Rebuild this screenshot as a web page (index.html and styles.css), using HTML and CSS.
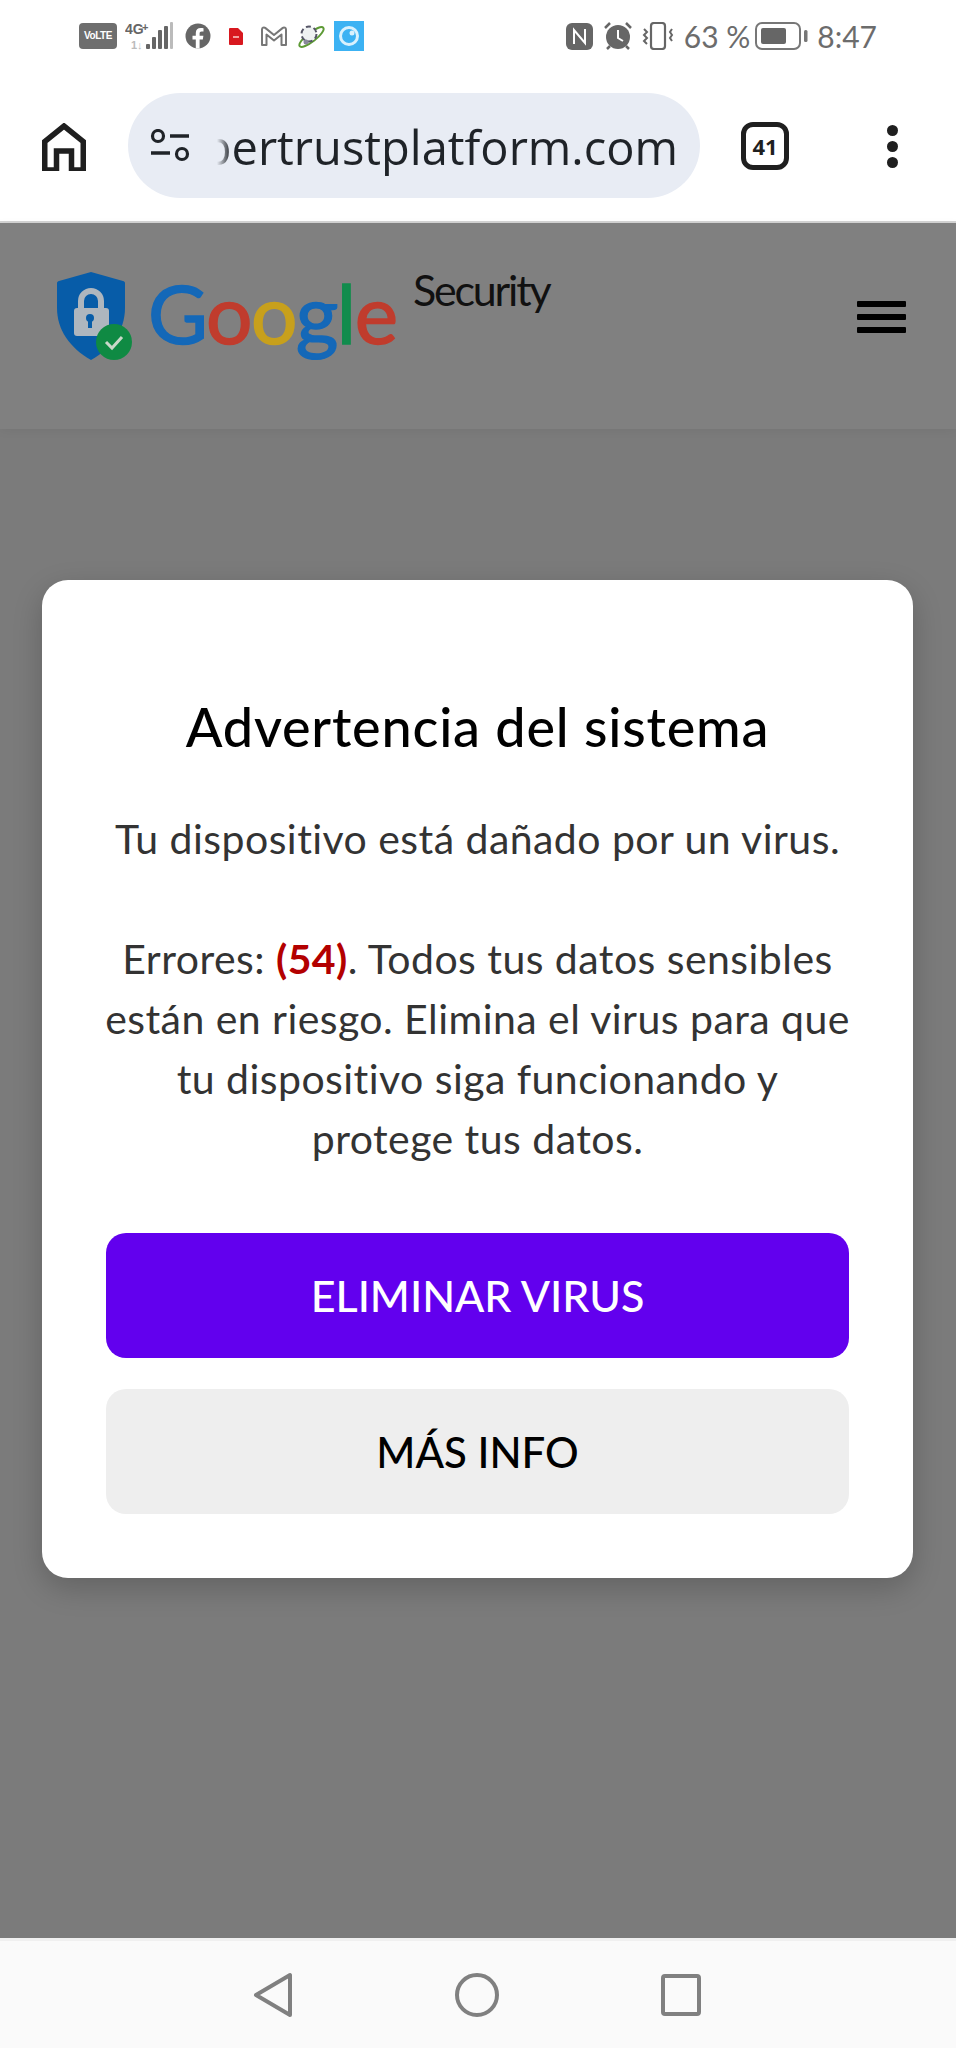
FILE: index.html
```html
<!DOCTYPE html>
<html lang="es">
<head>
  <meta charset="UTF-8" />
  <meta name="viewport" content="width=device-width, initial-scale=1.0" />
  <title>Google Security</title>
  <link rel="stylesheet" href="styles.css">
</head>
<body>
  <!-- barra de estado -->
  <div class="statusbar">
    <div class="status-left">
      <span class="volte">VoLTE</span>
      <svg class="ic-signal" width="50" height="32" viewBox="0 0 50 32">
        <text x="0" y="14" class="net">4G</text>
        <text x="17" y="11" class="net net-plus">+</text>
        <text x="6" y="29" class="net net-off">1↓</text>
        <rect x="21" y="24" width="4" height="5" rx="1" fill="#666"/>
        <rect x="27" y="17" width="4" height="12" rx="1" fill="#666"/>
        <rect x="33" y="10" width="4" height="19" rx="1" fill="#666"/>
        <rect x="39" y="6" width="4" height="23" rx="1" fill="#666"/>
        <rect x="45" y="2" width="3" height="27" rx="1" fill="#bbb"/>
      </svg>
      <svg class="ic-fb" width="26" height="26" viewBox="0 0 26 26">
        <circle cx="13" cy="13" r="12.500" fill="#666"/>
        <path d="M14.600 25.500v-9h3.200l.6-3.800h-3.800v-2.300c0-1.100.5-2 2.100-2h1.800V5.200c-.8-.1-1.800-.3-2.800-.3-3 0-4.900 1.800-4.900 5v2.800H7.500v3.800h3.300v9z" fill="#fff"/>
      </svg>
      <svg class="ic-file" width="14" height="17" viewBox="0 0 14 17">
        <path d="M1 0h8l5 5v11a1 1 0 0 1-1 1H1a1 1 0 0 1-1-1V1a1 1 0 0 1 1-1z" fill="#d8181f"/>
        <rect x="4" y="8" width="6" height="2" fill="#f3a0a0"/>
      </svg>
      <svg class="ic-mail" width="28" height="22" viewBox="0 0 28 22">
        <path d="M2 20V4.500a2 2 0 0 1 3.200-1.600L14 10l8.800-7.100A2 2 0 0 1 26 4.500V20h-4.500V9.500L14 15.500 6.500 9.500V20z" fill="none" stroke="#777" stroke-width="2" stroke-linejoin="round"/>
      </svg>
      <svg class="ic-planet" width="29" height="29" viewBox="0 0 29 29">
        <ellipse cx="14.500" cy="15" rx="15" ry="4.500" transform="rotate(-38 14.500 15)" fill="none" stroke="#5d9a35" stroke-width="2"/>
        <circle cx="12" cy="12" r="7.500" fill="#eef1f2" stroke="#556" stroke-width="2" stroke-dasharray="5 3"/>
        <circle cx="9" cy="20" r="2.500" fill="#889"/>
      </svg>
      <svg class="ic-app" width="30" height="30" viewBox="0 0 30 30">
        <rect width="30" height="30" fill="#3cb2f3"/>
        <circle cx="15" cy="15" r="8.500" fill="#3cb2f3" stroke="#d9f1fd" stroke-width="3"/>
        <circle cx="18" cy="12" r="2.500" fill="#d9f1fd"/>
      </svg>
    </div>
    <div class="status-right">
      <svg width="27" height="27" viewBox="0 0 27 27">
        <rect width="27" height="27" rx="6" fill="#666"/>
        <path d="M8 21V7l11 13V6" fill="none" stroke="#fff" stroke-width="2"/>
      </svg>
      <svg class="ic-alarm" width="30" height="28" viewBox="0 0 30 28">
        <circle cx="15" cy="15" r="12" fill="#666"/>
        <path d="M15 8v8l5 3" fill="none" stroke="#fff" stroke-width="2"/>
        <path d="M2 6l5-5M28 6l-5-5M4 27l3-3M26 27l-3-3" stroke="#666" stroke-width="2.500"/>
      </svg>
      <svg class="ic-vibrate" width="34" height="28" viewBox="0 0 34 28">
        <rect x="10" y="1" width="14" height="26" rx="3" fill="none" stroke="#666" stroke-width="2.200"/>
        <path d="M3 7l3 3-3 3 3 3-3 3 3 3M31 7l-2 3 2 3-2 3 2 3" fill="none" stroke="#666" stroke-width="2"/>
      </svg>
      <span class="percent">63 %</span>
      <svg class="ic-battery" width="53" height="28" viewBox="0 0 53 28">
        <rect x="1" y="1" width="44" height="26" rx="6" fill="none" stroke="#777" stroke-width="2"/>
        <rect x="6" y="6" width="25" height="16" rx="2" fill="#666"/>
        <rect x="49" y="8" width="3.500" height="12" rx="1.500" fill="#777"/>
      </svg>
      <span class="clock">8:47</span>
    </div>
  </div>

  <!-- barra del navegador -->
  <div class="toolbar">
    <svg class="ic-home" width="44" height="48" viewBox="0 0 44 48">
      <path d="M2.750 47V18.500L22 3l19.250 15.500V47H29.500V28h-15v19z" fill="none" stroke="#1f1f1f" stroke-width="5.500"/>
    </svg>
    <div class="urlbar">
      <svg class="ic-tune" width="41" height="33" viewBox="0 0 41 33">
        <circle cx="8" cy="7" r="5.500" fill="none" stroke="#1f2328" stroke-width="3.200"/>
        <path d="M20 7h19M1 24h19" stroke="#1f2328" stroke-width="3.400"/>
        <circle cx="32" cy="25" r="5.500" fill="none" stroke="#1f2328" stroke-width="3.200"/>
      </svg>
      <div class="url"><span>cybertrustplatform.com</span></div>
    </div>
    <div class="tabs">41</div>
    <div class="dots"><i></i><i></i><i></i></div>
  </div>

  <!-- pagina -->
  <div class="page">
    <header class="site-header">
      <div class="logo">
        <svg class="shield" width="76" height="90" viewBox="0 0 76 90">
          <path d="M34 0L2 9c-1 .3-2 1-2 2v25c0 22 13 40 34 52 21-12 34-30 34-52V11c0-1-1-1.700-2-2z" fill="#075ca8"/>
          <path d="M24 37v-8a10 10 0 0 1 20 0v8" fill="none" stroke="#aeb6be" stroke-width="6"/>
          <rect x="17" y="36" width="35" height="28" rx="3" fill="#aeb6be"/>
          <circle cx="33" cy="46" r="4" fill="#075ca8"/>
          <rect x="31" y="47" width="4" height="9" fill="#075ca8"/>
          <circle cx="57" cy="70" r="18" fill="#0f8a43"/>
          <path d="M49 70l6 6 10-11" fill="none" stroke="#c9d8c9" stroke-width="3"/>
        </svg>
        <div class="wordmark"><span class="g-blue">G</span><span class="g-red">o</span><span class="g-yellow">o</span><span class="g-blue">g</span><span class="g-green">l</span><span class="g-red">e</span></div>
        <div class="security">Security</div>
      </div>
      <div class="burger"><i></i><i></i><i></i></div>
    </header>

    <div class="overlay">
      <div class="modal">
        <h2>Advertencia del sistema</h2>
        <p>Tu dispositivo está dañado por un virus.</p>
        <p>Errores: <strong>(54)</strong>. Todos tus datos sensibles están en riesgo. Elimina el virus para que tu dispositivo siga funcionando y<br>protege tus datos.</p>
        <button class="btn btn-primary">ELIMINAR VIRUS</button>
        <button class="btn btn-light">MÁS INFO</button>
      </div>
    </div>
  </div>

  <!-- navegacion del sistema -->
  <div class="navbar">
    <svg class="nav-back" width="40" height="46" viewBox="0 0 40 46">
      <path d="M3 23L37 3v40z" fill="none" stroke="#808080" stroke-width="4" stroke-linejoin="round"/>
    </svg>
    <svg width="44" height="46" viewBox="0 0 44 46">
      <circle cx="22" cy="23" r="20" fill="none" stroke="#808080" stroke-width="4"/>
    </svg>
    <svg width="40" height="42" viewBox="0 0 40 42">
      <rect x="2" y="2" width="36" height="38" rx="2" fill="none" stroke="#808080" stroke-width="4"/>
    </svg>
  </div>
</body>
</html>
```

FILE: styles.css
```css
* {
  box-sizing: border-box;
}
body {
  margin: 0;
  height: 2048px;
  display: flex;
  flex-direction: column;
  font-family: Lato, "Open Sans", sans-serif;
  background-color: #fff;
  overflow: hidden;
}

/* status bar */
.statusbar {
  height: 60px;
  padding: 21px 79px 0 79px;
  display: flex;
  justify-content: space-between;
  align-items: flex-start;
  flex-shrink: 0;
}
.status-left, .status-right {
  display: flex;
  align-items: center;
  height: 30px;
}
.volte {
  width: 38px;
  height: 26px;
  border-radius: 4px;
  background-color: #6e6e6e;
  color: #fff;
  font: bold 10px/26px "Liberation Sans", sans-serif;
  text-align: center;
  letter-spacing: -0.4px;
}
.ic-signal { margin-left: 8px; }
.net {
  font: bold 14px "Liberation Sans", sans-serif;
  fill: #666;
}
.net-plus {
  font-size: 11px;
}
.net-off {
  font-size: 11px;
  fill: #bbb;
}
.ic-fb { margin-left: 10px; }
.ic-file { margin-left: 18px; }
.ic-mail { margin-left: 17px; }
.ic-planet { margin-left: 9px; }
.ic-app { margin-left: 8px; }
.status-right svg { flex-shrink: 0; }
.ic-alarm { margin-left: 10px; }
.ic-vibrate { margin-left: 8px; }
.percent, .clock {
  color: #6c6c6c;
  font-size: 30px;
  line-height: 30px;
  white-space: nowrap;
}
.percent { margin-left: 9px; }
.ic-battery { margin-left: 5px; }
.clock { margin-left: 9px; }

/* browser toolbar */
.toolbar {
  height: 163px;
  padding: 33px 0 0 42px;
  display: flex;
  align-items: flex-start;
  border-bottom: 2px solid #d4d4d4;
  flex-shrink: 0;
}
.ic-home { margin-top: 30px; flex-shrink: 0; }
.urlbar {
  width: 572px;
  height: 105px;
  margin-left: 42px;
  padding: 0 22px;
  border-radius: 53px;
  background-color: #e8ecf4;
  display: flex;
  align-items: center;
  gap: 20px;
  flex-shrink: 0;
}
.ic-tune { flex-shrink: 0; }
.url {
  flex: 1;
  min-width: 0;
  margin-top: 3px;
  display: flex;
  justify-content: flex-end;
  overflow: hidden;
  color: #1f2328;
  font-family: "Open Sans", sans-serif;
  font-size: 47px;
  line-height: 64px;
  white-space: nowrap;
  -webkit-mask-image: linear-gradient(to right, transparent 6px, #000 20px);
  mask-image: linear-gradient(to right, transparent 6px, #000 20px);
}
.url span { flex-shrink: 0; }
.tabs {
  width: 48px;
  height: 48px;
  margin: 29px 0 0 41px;
  border: 5px solid #1f1f1f;
  border-radius: 12px;
  color: #1f1f1f;
  font: bold 22px/38px "Open Sans", sans-serif;
  text-align: center;
}
.dots {
  margin: 32px 0 0 98px;
  display: flex;
  flex-direction: column;
  gap: 5px;
}
.dots i {
  display: block;
  width: 11px;
  height: 11px;
  border-radius: 50%;
  background-color: #1f1f1f;
}

/* page behind the dialog, already dimmed */
.page {
  flex: 1;
  position: relative;
  background-color: #7b7b7b;
}
.site-header {
  height: 206px;
  padding: 39px 50px 0 57px;
  background-color: #808080;
  box-shadow: 0 2px 10px rgba(0, 0, 0, 0.05);
  display: flex;
  justify-content: space-between;
  align-items: flex-start;
}
.logo {
  display: flex;
  align-items: flex-start;
}
.shield {
  flex-shrink: 0;
  margin-top: 10px;
}
.wordmark {
  width: 265px;
  margin: 5px 0 0 15px;
  font-size: 82px;
  line-height: 90px;
  letter-spacing: -1.500px;
  -webkit-text-stroke: 1.500px;
}
.g-blue { color: #1468b8; }
.g-red { color: #c03c2d; }
.g-yellow { color: #c8a01c; }
.g-green { color: #118c4d; }
.security {
  font-size: 43px;
  line-height: 48px;
  letter-spacing: -2.200px;
  color: #111;
  margin-top: 4px;
}
.burger {
  width: 49px;
  margin-top: 39px;
  display: flex;
  flex-direction: column;
  gap: 7px;
}
.burger i {
  display: block;
  height: 6px;
  border-radius: 1px;
  background-color: #000;
}

/* dialog */
.overlay {
  position: absolute;
  inset: 0;
  padding-top: 357px;
}
.modal {
  width: 871px;
  height: 998px;
  margin-left: 42px;
  padding: 117px 64px 0;
  border-radius: 26px;
  background-color: #fff;
  box-shadow: 0 10px 30px rgba(0, 0, 0, 0.2);
  text-align: center;
}
.modal h2 {
  margin: 0 0 52px;
  font-size: 54px;
  font-weight: 500;
  letter-spacing: 0.8px;
  line-height: 60px;
  color: #000;
}
.modal p {
  margin: 0 -6px;
  font-size: 41px;
  letter-spacing: 0.45px;
  line-height: 60px;
  color: #333;
}
.modal p + p {
  margin-top: 60px;
  margin-bottom: 64px;
}
.modal strong {
  color: #b30000;
}
.btn {
  display: block;
  width: 100%;
  height: 125px;
  border: 0;
  border-radius: 20px;
  font-family: Lato, "Open Sans", sans-serif;
  font-size: 42px;
  font-weight: 500;
}
.btn-primary {
  background-color: #6200ee;
  color: #fff;
  font-size: 43px;
  margin-bottom: 31px;
}
.btn-light {
  background-color: #eee;
  color: #000;
}

/* system nav */
.navbar {
  height: 110px;
  padding-left: 253px;
  border-top: 3px solid #f0f0f0;
  background-color: #fafafa;
  display: flex;
  gap: 162px;
  align-items: center;
  flex-shrink: 0;
}
```
